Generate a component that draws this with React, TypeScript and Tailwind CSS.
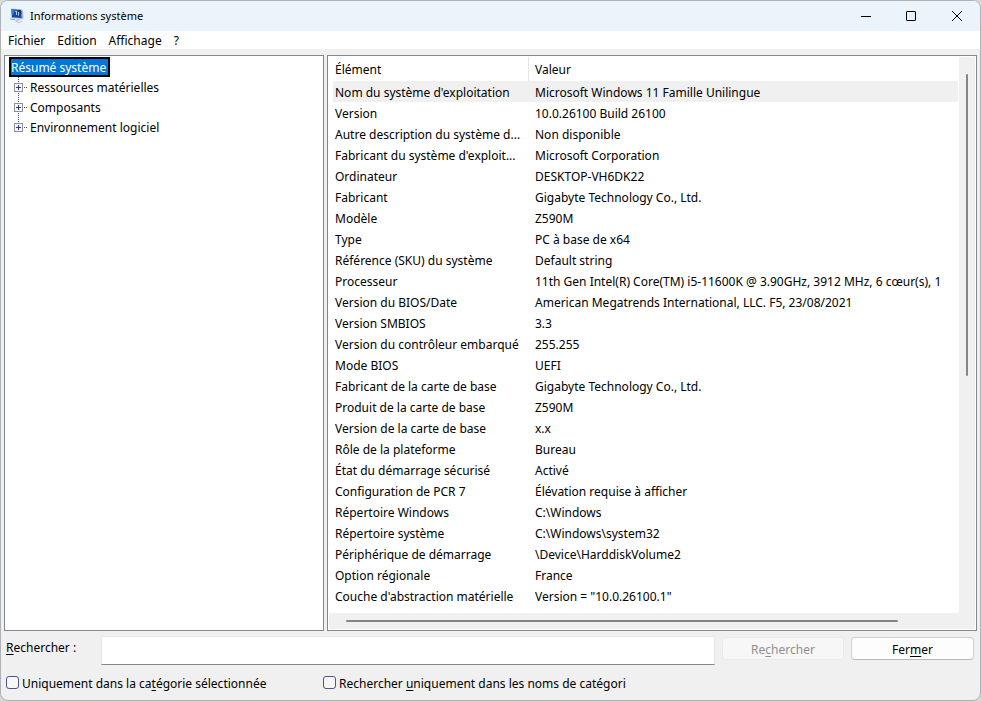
import React, { useState } from 'react';

type Entry = {
    label: string;
    value: string;
};

const menus = ['Fichier', 'Edition', 'Affichage', '?'];

const categories = ['Ressources matérielles', 'Composants', 'Environnement logiciel'];

const entries: Entry[] = [
    { label: "Nom du système d'exploitation", value: 'Microsoft Windows 11 Famille Unilingue' },
    { label: 'Version', value: '10.0.26100 Build 26100' },
    { label: 'Autre description du système d...', value: 'Non disponible' },
    { label: "Fabricant du système d'exploit...", value: 'Microsoft Corporation' },
    { label: 'Ordinateur', value: 'DESKTOP-VH6DK22' },
    { label: 'Fabricant', value: 'Gigabyte Technology Co., Ltd.' },
    { label: 'Modèle', value: 'Z590M' },
    { label: 'Type', value: 'PC à base de x64' },
    { label: 'Référence (SKU) du système', value: 'Default string' },
    { label: 'Processeur', value: '11th Gen Intel(R) Core(TM) i5-11600K @ 3.90GHz, 3912 MHz, 6 cœur(s), 1' },
    { label: 'Version du BIOS/Date', value: 'American Megatrends International, LLC. F5, 23/08/2021' },
    { label: 'Version SMBIOS', value: '3.3' },
    { label: 'Version du contrôleur embarqué', value: '255.255' },
    { label: 'Mode BIOS', value: 'UEFI' },
    { label: 'Fabricant de la carte de base', value: 'Gigabyte Technology Co., Ltd.' },
    { label: 'Produit de la carte de base', value: 'Z590M' },
    { label: 'Version de la carte de base', value: 'x.x' },
    { label: 'Rôle de la plateforme', value: 'Bureau' },
    { label: 'État du démarrage sécurisé', value: 'Activé' },
    { label: 'Configuration de PCR 7', value: 'Élévation requise à afficher' },
    { label: 'Répertoire Windows', value: 'C:\\Windows' },
    { label: 'Répertoire système', value: 'C:\\Windows\\system32' },
    { label: 'Périphérique de démarrage', value: '\\Device\\HarddiskVolume2' },
    { label: 'Option régionale', value: 'France' },
    { label: "Couche d'abstraction matérielle", value: 'Version = "10.0.26100.1"' }
];

const AppIcon = () => (
    <svg width="16" height="16" viewBox="0 0 16 16" aria-hidden="true">
        <path d="M11 1.500l3 1 .5 8-2 1z" fill="#a9b3c0" />
        <path d="M7 11.500l4-.5 3 2.500-4 1.700-4-1.700z" fill="#c6c8cb" />
        <path d="M2 .5l11 1 .5 9.500L2.500 10z" fill="#a5b8d3" />
        <path d="M2.500 1.200l9.500.9.600 8L3 9.200z" fill="#17489f" />
        <path d="M2.500 1.200l3.500.3L4 7 2.800 7z" fill="#3d7bd0" />
        <path d="M9 2l3 .2.500 4z" fill="#0b2f80" />
        <path d="M6 3.500l1.500-.5v4M9.500 4v3.500" stroke="#a9cbf5" fill="none" />
        <path d="M1 10.500l5 .5v1l-5-.5z" fill="#7c9dc9" />
        <path d="M8 13l4-1 1.500 1.300-3.500 1.200z" fill="#e8e9ea" />
    </svg>
);

const TitleBar = () => (
    <header className="flex h-[30px] shrink-0 items-center bg-[#ebf4fa] pl-2">
        <AppIcon />
        <h1 className="flex-1 pl-[5px] text-[11px]">Informations système</h1>
        <button type="button" aria-label="Réduire" className="flex h-full w-11 items-center justify-center">
            <svg width="10" height="10" viewBox="0 0 10 10" stroke="#000" shapeRendering="crispEdges">
                <path d="M0 5.500h10" />
            </svg>
        </button>
        <button type="button" aria-label="Agrandir" className="flex h-full w-[46px] items-center justify-center">
            <svg width="10" height="10" viewBox="0 0 10 10" stroke="#000" fill="none">
                <rect x="0.500" y="0.500" width="9" height="9" rx="0.500" />
            </svg>
        </button>
        <button type="button" aria-label="Fermer la fenêtre" className="flex h-full w-[46px] items-center justify-center">
            <svg width="10" height="10" viewBox="0 0 10 10" stroke="#000" fill="none">
                <path d="M0 0l10 10M10 0L0 10" />
            </svg>
        </button>
    </header>
);

const TreeNode = ({ label, isLast }: { label: string; isLast: boolean }) => (
    <li className="flex h-5 items-center">
        <button type="button" aria-label={`Développer ${label}`}>
            <svg width="16" height="20" viewBox="0 0 16 20" fill="none" shapeRendering="crispEdges">
                <path d="M4.500 0v6M10 10.500h3" stroke="#3c4a8c" strokeDasharray="1 1" />
                {isLast ? null : <path d="M4.500 16v4" stroke="#3c4a8c" strokeDasharray="1 1" />}
                <rect x="0.500" y="6.500" width="8" height="8" stroke="#919191" fill="#f6f6f6" />
                <path d="M2 10.500h5M4.500 8v5" stroke="#2c3a8c" />
            </svg>
        </button>
        <button type="button" className="pt-[2px] whitespace-nowrap">{label}</button>
    </li>
);

const CategoryTree = () => (
    <nav aria-label="Catégories" className="w-[320px] shrink-0 border border-[#828790] bg-white pt-px pl-1">
        <button type="button" className="block h-5 border-2 border-black bg-[#0078d7] pt-px pr-[2px] leading-4 whitespace-nowrap text-white">
            Résumé système
        </button>
        <ul className="pl-[5px]">
            {categories.map((label, index) => (
                <TreeNode key={label} label={label} isLast={index === categories.length - 1} />
            ))}
        </ul>
    </nav>
);

const DetailsPane = () => (
    <section className="grid min-w-0 flex-1 grid-cols-[minmax(0,1fr)_16px] grid-rows-[minmax(0,1fr)_16px] border border-[#828790] bg-white p-px">
        <div className="overflow-hidden pr-px pl-1">
            <table className="w-full table-fixed border-separate border-spacing-0 text-left">
                <thead>
                    <tr className="h-6">
                        <th className="w-[196px] border-r border-[#e5e5e5] p-0 pt-[2px] pl-[2px] font-normal">Élément</th>
                        <th className="p-0 pt-[2px] pl-[6px] font-normal">Valeur</th>
                    </tr>
                </thead>
                <tbody>
                    {entries.map(({ label, value }, index) => (
                        <tr key={label} className={index === 0 ? 'h-[21px] bg-[#f0f0f0]' : 'h-[21px]'}>
                            <td className="overflow-hidden p-0 pt-[2px] pl-[2px] whitespace-nowrap">{label}</td>
                            <td className="overflow-hidden p-0 pt-[2px] pl-[6px] whitespace-nowrap">{value}</td>
                        </tr>
                    ))}
                </tbody>
            </table>
        </div>
        <div className="flex justify-center bg-[#f0f0f0] pt-[17px]">
            <div className="h-[56%] w-[2px] rounded-full bg-[#858585]" />
        </div>
        <div className="flex items-center bg-[#f0f0f0] pl-[17px]">
            <div className="h-[2px] w-[90%] rounded-full bg-[#858585]" />
        </div>
        <div className="bg-[#f0f0f0]" />
    </section>
);

type OptionProps = {
    id: string;
    checked: boolean;
    onChange: (checked: boolean) => void;
    children: React.ReactNode;
};

const Option = ({ id, checked, onChange, children }: OptionProps) => (
    <div className="flex items-center gap-[3px]">
        <input
            id={id}
            type="checkbox"
            checked={checked}
            onChange={e => onChange(e.target.checked)}
            className="size-[13px] shrink-0 appearance-none rounded-[3px] border border-[#4a5490] bg-[#f6f6f6] checked:bg-[#0067c0]"
        />
        <label htmlFor={id} className="pt-[2px] whitespace-nowrap">{children}</label>
    </div>
);

const SearchForm = () => {
    const [query, setQuery] = useState('');
    const [selectedOnly, setSelectedOnly] = useState(false);
    const [namesOnly, setNamesOnly] = useState(false);

    return (
        <form onSubmit={e => e.preventDefault()} className="shrink-0 pt-[5px] pr-[3px] pl-[2px]">
            <div className="flex items-start">
                <label htmlFor="query" className="w-[95px] pt-1">
                    <u className="underline-offset-2">R</u>echercher :
                </label>
                <input
                    id="query"
                    type="text"
                    value={query}
                    onChange={e => setQuery(e.target.value)}
                    className="h-[29px] min-w-0 flex-1 border border-[#e8e8e8] border-b-[#858585] bg-white px-1 outline-none"
                />
                <button
                    type="submit"
                    disabled={!query}
                    className="mt-px ml-[7px] h-[23px] w-[122px] rounded-[4px] border border-[#eaeaea] bg-[#f7f7f7] pt-[2px] text-black disabled:text-[#8f8f8f]"
                >
                    Re<u className="underline-offset-2">c</u>hercher
                </button>
                <button type="button" className="mt-px ml-[7px] h-[23px] w-[123px] rounded-[4px] border border-[#d0d0d0] border-b-[#bababa] bg-[#fdfdfd] pt-[2px]">
                    Fer<u className="underline-offset-2">m</u>er
                </button>
            </div>
            <div className="flex h-[35px] items-center">
                <div className="w-[317px]">
                    <Option id="selected-only" checked={selectedOnly} onChange={setSelectedOnly}>
                        Uniquement dans la ca<u className="underline-offset-2">t</u>égorie sélectionnée
                    </Option>
                </div>
                <Option id="names-only" checked={namesOnly} onChange={setNamesOnly}>
                    Rechercher <u className="underline-offset-2">u</u>niquement dans les noms de catégori
                </Option>
            </div>
        </form>
    );
};

const App = () => (
    <div className="h-screen bg-[#d8d8da] font-['Noto_Sans','Segoe_UI',sans-serif] text-[12px] leading-4 text-black">
        <div className="flex h-full flex-col overflow-hidden rounded-lg border border-[#b0b1b4] bg-[#f0f0f0]">
            <TitleBar />
            <ul className="flex h-[18px] shrink-0 items-center gap-3 bg-white pt-[2px] pl-[7px]">
                {menus.map(menu => (
                    <li key={menu}>
                        <button type="button" className="block">{menu}</button>
                    </li>
                ))}
            </ul>
            <main className="flex min-h-0 flex-1 flex-col px-[3px] pt-[6px]">
                <div className="flex min-h-0 flex-1 gap-[3px]">
                    <CategoryTree />
                    <DetailsPane />
                </div>
                <SearchForm />
            </main>
        </div>
    </div>
);

export default App;
